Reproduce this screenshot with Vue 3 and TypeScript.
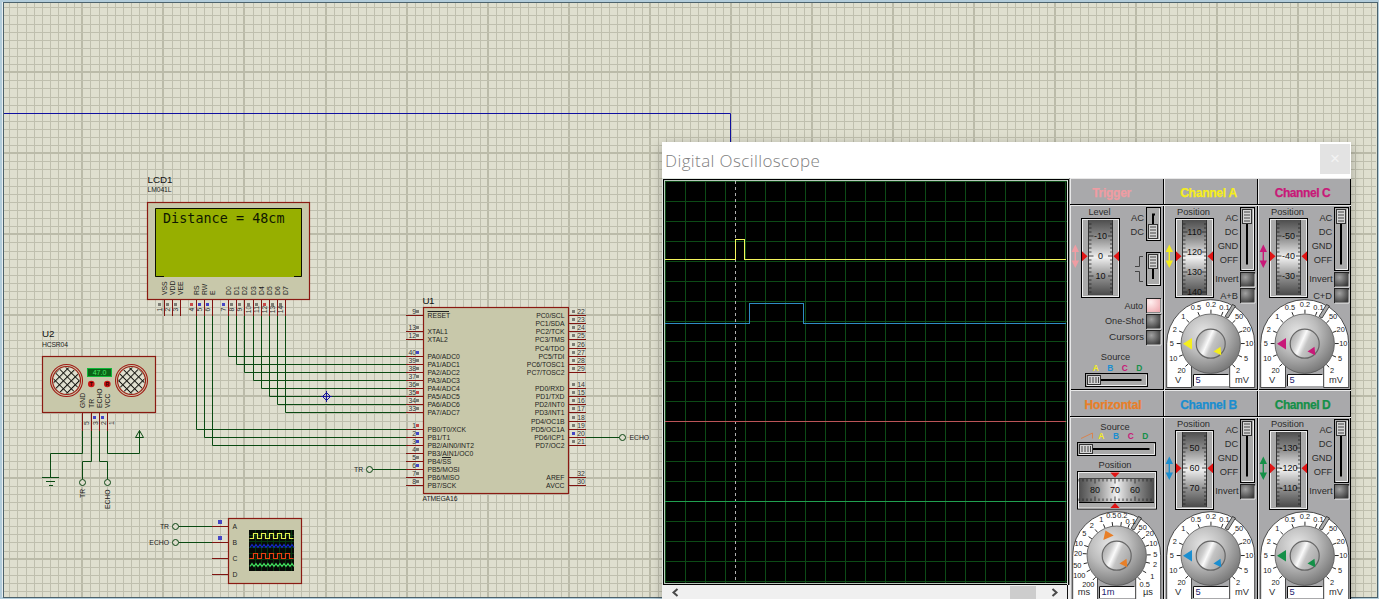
<script setup lang="ts">
interface Mark { x: number; y: number; t: string }
interface Panel {
  name: string
  color: string
  kind: 'trigger' | 'horizontal' | 'channel'
  title: number
  center: number
  values: string[]
  shift: number
  extra?: string
}

const STEP = 8.107
const gridX: number[] = Array.from({ length: 169 }, (_, i) => i - 9)
const gridY: number[] = Array.from({ length: 73 }, (_, i) => i - 8)
const gx = (k: number): number => Math.floor(82.85 + k * STEP)
const gy = (k: number): number => Math.floor(72.7 + k * STEP)

const gray = '#7d7d75'
const blue = '#4545c4'
const red = '#c84848'

const lcdPins = [
  [164.5, 'VSS', '1', gray], [172.5, 'VDD', '2', gray], [180.5, 'VEE', '3', gray],
  [196.5, 'RS', '4', red], [204.5, 'RW', '5', blue], [212.5, 'E', '6', blue],
  [228.5, 'D0', '7', blue], [236.5, 'D1', '8', gray], [244.5, 'D2', '9', gray], [253.5, 'D3', '10', gray],
  [261.5, 'D4', '11', gray], [269.5, 'D5', '12', red], [277.5, 'D6', '13', gray], [285.5, 'D7', '14', gray],
].map(([x, name, num, c]) => ({ x: x as number, name: name as string, num: num as string, c: c as string }))

const left = [
  [315.5, 'RESET', '9', gray], [331.5, 'XTAL1', '13', gray], [339.5, 'XTAL2', '12', gray],
  [356.5, 'PA0/ADC0', '40', blue], [364.5, 'PA1/ADC1', '39', gray], [372.5, 'PA2/ADC2', '38', gray],
  [380.5, 'PA3/ADC3', '37', gray], [388.5, 'PA4/ADC4', '36', gray], [396.5, 'PA5/ADC5', '35', red],
  [404.5, 'PA6/ADC6', '34', gray], [412.5, 'PA7/ADC7', '33', gray],
  [429.5, 'PB0/T0/XCK', '1', red], [437.5, 'PB1/T1', '2', blue], [445.5, 'PB2/AIN0/INT2', '3', blue],
  [453.5, 'PB3/AIN1/OC0', '4', gray], [461.5, 'PB4/SS', '5', gray], [469.5, 'PB5/MOSI', '6', blue],
  [477.5, 'PB6/MISO', '7', gray], [485.5, 'PB7/SCK', '8', gray],
].map(([y, name, num, c]) => ({ y: y as number, name: name as string, num: num as string, c: c as string }))

const right = [
  [315.5, 'PC0/SCL', '22', gray], [323.5, 'PC1/SDA', '23', gray], [331.5, 'PC2/TCK', '24', gray],
  [339.5, 'PC3/TMS', '25', gray], [348.5, 'PC4/TDO', '26', gray], [356.5, 'PC5/TDI', '27', gray],
  [364.5, 'PC6/TOSC1', '28', gray], [372.5, 'PC7/TOSC2', '29', gray],
  [388.5, 'PD0/RXD', '14', gray], [396.5, 'PD1/TXD', '15', gray], [404.5, 'PD2/INT0', '16', gray],
  [412.5, 'PD3/INT1', '17', gray], [421.5, 'PD4/OC1B', '18', gray], [429.5, 'PD5/OC1A', '19', gray],
  [437.5, 'PD6/ICP1', '20', blue], [445.5, 'PD7/OC2', '21', gray],
  [477.5, 'AREF', '32', ''], [485.5, 'AVCC', '30', ''],
].map(([y, name, num, c]) => ({ y: y as number, name: name as string, num: num as string, c: c as string }))

const wires: string[] = [
  ...[3, 4, 5].map((i, n) => `M${lcdPins[i].x} 316V${[429.5, 437.5, 445.5][n]}H406`),
  ...[6, 7, 8, 9, 10, 11, 12, 13].map((i, n) => `M${lcdPins[i].x} 316V${left[n + 3].y}H406`),
  'M373 469.5H406', 'M586 437.5H619', 'M179 526.5H212', 'M179 542.5H212',
  'M82.5 431V453.5H50.5V477', 'M42 477.5H59M46 481.5H55M49 485.5H53',
  'M91.5 431V461.5H82.5V479', 'M99.5 431V461.5H107.5V479', 'M107.5 431V453.5H139.5V430.5L135.5 437.5H143.5L139.5 430.5',
]
const terminals = [[369.5, 469.5], [622.5, 437.5], [175.5, 526.5], [175.5, 542.5], [82.5, 482.5], [107.5, 482.5]]
const sensorPins = [[82.5, 'GND', '5'], [91.5, 'TR', '3'], [99.5, 'ECHO', '2'], [107.5, 'VCC', '1']]
  .map(([x, name, num]) => ({ x: x as number, name: name as string, num: num as string }))

const square = (x: number, top: number, low: number, w: number): string => {
  let d = `M249.5 ${low}H${x}`
  for (let i = 0; i < 5; i++) d += `V${top}h${w}V${low}h${w}`
  return d
}
const ripple = (y: number, a: number): string => {
  let d = `M250 ${y}`
  for (let i = 0; i < 11; i++) d += `l2 ${-a}l2 ${a}`
  return d
}

const panels: Panel[] = [
  { name: 'Trigger', color: '#ef9ca2', kind: 'trigger', title: 39, center: 41.7, values: ['-10', '0', '10'], shift: 0 },
  { name: 'Channel A', color: '#f5ee1c', kind: 'channel', title: 57, center: 44.7, values: ['110', '120', '130', '140'], shift: -4, extra: 'A+B' },
  { name: 'Channel C', color: '#c81878', kind: 'channel', title: 56, center: 44.7, values: ['-50', '-40', '-30'], shift: 0, extra: 'C+D' },
  { name: 'Horizontal', color: '#e87f28', kind: 'horizontal', title: 57, center: 43, values: ['80', '70', '60'], shift: 0 },
  { name: 'Channel B', color: '#1a8ed0', kind: 'channel', title: 57, center: 44.7, values: ['50', '60', '70'], shift: 0 },
  { name: 'Channel D', color: '#149048', kind: 'channel', title: 56, center: 44.7, values: ['-130', '-120', '-110'], shift: 0 },
]

const toMarks = (rows: [number, number, string][]): Mark[] => rows.map(([x, y, t]) => ({ x, y, t }))
const voltMarks = toMarks([
  [17.5, 192, '20'], [9.3, 180.7, '10'], [7.7, 165.5, '5'], [10.7, 151.3, '2'], [19.3, 138.7, '1'],
  [32, 129.3, '0.5'], [47, 126.7, '0.2'], [60.5, 129.7, '0.1'],
  [75, 138.7, '50'], [82.7, 151.3, '20'], [85.3, 165.5, '10'], [82, 180.7, '5'], [74, 192, '2'],
])
const timeMarks = toMarks([
  [18.3, 194.7, '200'], [9.3, 185.7, '100'], [7.3, 175.3, '50'], [8, 163.3, '20'], [8.7, 153.7, '10'], [14.3, 143.7, '5'],
  [21.7, 135.3, '2'], [31.3, 129.3, '1'], [41.3, 125.7, '0.5'], [52.3, 125.3, '0.2'], [60.7, 131, '0.1'],
  [72.7, 137.7, '50'], [79.7, 143.7, '20'], [83.3, 153.7, '10'], [85.3, 164.7, '5'], [85, 174.3, '2'], [82.3, 186.3, '1'], [74.7, 194.3, '0.5'],
])

const marks = (p: Panel): Mark[] => (p.kind === 'horizontal' ? timeMarks : voltMarks)
const tick = (m: Mark): string => {
  const a = Math.atan2(m.y - 165.7, m.x - 46.7)
  const c = Math.cos(a), s = Math.sin(a)
  return `M${46.7 + 30 * c} ${165.7 + 30 * s}L${46.7 + 34 * c} ${165.7 + 34 * s}`
}
const wheelTicks = (shift: number): string => {
  let d = ''
  for (let i = -11; i <= 11; i++) {
    const y = 78 + shift + i * 4
    if (y < 43 || y > 116) continue
    const n = i % 5 === 0 ? 4.5 : 2.5
    d += `M19 ${y}h${n}M42.5 ${y}h${-n}`
  }
  return d
}
const timeTicks = (() => {
  let d = ''
  for (let i = -9; i <= 9; i++) {
    const n = i % 5 === 0 ? 4.5 : 2.5
    d += `M${45 + i * 4} 89v${n}M${45 + i * 4} 111v${-n}`
  }
  return d
})()
const letters = [['A', '#f5ee1c'], ['B', '#1a8ed0'], ['C', '#c81878'], ['D', '#149048']]
</script>

<template>
  <main class="screen">
    <svg class="sheet" width="1379" height="599" viewBox="0 0 1379 599">
      <defs>
        <pattern id="mesh" width="5.6" height="5.6" patternUnits="userSpaceOnUse" patternTransform="rotate(45)">
          <rect width="6" height="6" fill="#e0e0d0" />
          <path d="M0 .5H6M.5 0V6" stroke="#151510" stroke-width="1.1" />
        </pattern>
      </defs>
      <rect width="1379" height="599" fill="#b2ccda" />
      <rect x="2" y="2" width="2" height="595" fill="#e8eef0" />
      <rect x="3.5" y="2.5" width="1374" height="595" fill="#dfdfcf" stroke="#4c626c" />
      <g shape-rendering="crispEdges">
        <rect v-for="k in gridX.filter(k => gx(k) < 1376)" :key="'x' + k" :x="k % 10 ? gx(k) : gx(k) - 1" y="3" :width="k % 10 ? 1 : 2" height="594" :fill="k % 10 ? '#bfbfae' : '#bbbba9'" />
        <rect v-for="k in gridY.filter(k => gy(k) < 597)" :key="'y' + k" x="4" :y="k % 10 ? gy(k) : gy(k) - 1" width="1372" :height="k % 10 ? 1 : 2" :fill="k % 10 ? '#bfbfae' : '#bbbba9'" />
      </g>
      <path class="bus" d="M4 113.5H730.5V145" />
      <path v-for="d in wires" :key="d" class="wire" :d="d" />
      <circle v-for="t in terminals" :key="t.join()" class="terminal" :cx="t[0]" :cy="t[1]" r="3" />
      <g class="origin"><path d="M326.5 392.5l4 4-4 4-4-4z" /><path d="M321 396.5h11M326.5 391v11" /></g>

      <text class="ref" x="147.5" y="183" textLength="25">LCD1</text>
      <text class="part" x="147.5" y="192" textLength="24">LM041L</text>
      <rect class="body" x="147.5" y="202.5" width="162" height="97" />
      <rect x="155" y="208" width="147" height="69" fill="#97af00" />
      <path class="bezel" d="M164 276.5H155.5V208.5H301.5V276.5H294" />
      <text class="lcd" x="163" y="222.5" textLength="121.5" xml:space="preserve">Distance = 48cm</text>
      <g v-for="p in lcdPins" :key="p.name">
        <path class="pin" :d="`M${p.x} 300V316`" />
        <text class="part" :transform="`translate(${p.x + 2.5} 295) rotate(-90)`">{{ p.name }}</text>
        <rect :x="p.x - 6.5" y="303" width="3" height="3" :fill="p.c" />
        <text class="num" text-anchor="middle" :transform="`translate(${p.x - 2.5} 309.5) rotate(-90)`">{{ p.num }}</text>
      </g>

      <text class="ref" x="42" y="337" textLength="12.5">U2</text>
      <text class="part" x="42" y="346.5" textLength="26">HCSR04</text>
      <rect class="body" x="42.5" y="356.5" width="113" height="56" />
      <g v-for="x in [66.5, 131.5]" :key="x">
        <circle class="ring" :cx="x" cy="380.5" r="16" />
        <circle class="ring" :cx="x" cy="380.5" r="14" />
        <circle :cx="x" cy="380.5" r="13" fill="url(#mesh)" />
      </g>
      <rect x="87.5" y="368.5" width="24" height="8" fill="#0a6418" stroke="#10b838" />
      <text class="reading" x="99.5" y="375.2">47.0</text>
      <g v-for="(x, i) in [91.3, 107.3]" :key="x">
        <circle :cx="x" cy="384" r="3.3" fill="#c81414" />
        <text class="led" :x="x" y="386">{{ i ? 'R' : 'T' }}</text>
      </g>
      <g v-for="p in sensorPins" :key="p.name">
        <path class="pin" :d="`M${p.x} 413V431`" />
        <text class="part" :transform="`translate(${p.x + 2.5} 408) rotate(-90)`">{{ p.name }}</text>
        <text class="num" text-anchor="middle" :transform="`translate(${p.x + 6.3} 423) rotate(-90)`">{{ p.num }}</text>
      </g>
      <rect x="93" y="416" width="3" height="3" :fill="blue" />
      <rect x="101" y="416" width="3" height="3" :fill="blue" />
      <text class="part" transform="translate(85 498) rotate(-90)">TR</text>
      <text class="part" transform="translate(110 509) rotate(-90)">ECHO</text>

      <rect class="body" x="423.5" y="307.5" width="145" height="186" />
      <text class="ref" x="422.5" y="304" textLength="12">U1</text>
      <text class="part" x="422.5" y="501" textLength="35">ATMEGA16</text>
      <g v-for="p in left" :key="p.name">
        <path class="pin" :d="`M406 ${p.y}H423`" />
        <text class="part" x="427.5" :y="p.y + 2.5">{{ p.name }}</text>
        <text class="num" x="416" :y="p.y - 1.3" text-anchor="end">{{ p.num }}</text>
        <rect x="416" :y="p.y - 5.5" width="3" height="3" :fill="p.c" />
      </g>
      <path d="M427.5 311.5H449M442 457.5H451" stroke="#222" />
      <g v-for="p in right" :key="p.name">
        <path class="pin" :d="`M569 ${p.y}H586`" />
        <text class="part" x="564.5" :y="p.y + 2.5" text-anchor="end">{{ p.name }}</text>
        <text class="num" x="577.3" :y="p.y - 1.3">{{ p.num }}</text>
        <rect v-if="p.c" x="572" :y="p.y - 5.5" width="3" height="3" :fill="p.c" />
      </g>
      <text class="part" x="629.5" y="440">ECHO</text>
      <text class="part" x="354" y="472">TR</text>

      <rect class="body" x="228.5" y="518.5" width="73" height="65" />
      <g v-for="(t, i) in ['A', 'B', 'C', 'D']" :key="t">
        <path class="pin" :d="`M212 ${526.5 + i * 16}H228`" />
        <text class="part" x="232.5" :y="529 + i * 16">{{ t }}</text>
      </g>
      <rect x="218" y="520" width="4" height="4" :fill="blue" />
      <rect x="218" y="536" width="4" height="4" :fill="blue" />
      <text class="part" x="169" y="529" text-anchor="end">TR</text>
      <text class="part" x="169" y="545" text-anchor="end">ECHO</text>
      <rect x="249" y="530" width="45" height="41" fill="#060a06" />
      <path d="M249 535.5h45M249 541.5h45M249 547.5h45M249 553.5h45M249 559.5h45M249 565.5h45M255.5 530v41M261.5 530v41M267.5 530v41M273.5 530v41M279.5 530v41M285.5 530v41M291.5 530v41" stroke="#07380f" />
      <path :d="square(253.5, 533.5, 538.5, 4)" class="mini" stroke="#e4f050" />
      <path :d="ripple(547.5, 3)" class="mini" stroke="#1428c8" />
      <path :d="square(253.5, 553.5, 558.5, 4)" class="mini" stroke="#e84010" />
      <path :d="ripple(566.5, 3)" class="mini" stroke="#44e060" />
    </svg>

    <section class="window">
      <header class="titlebar">
        <span class="caption">Digital Oscilloscope</span>
        <span class="close">×</span>
      </header>
      <div class="content">
        <div class="display">
          <svg width="408" height="407" viewBox="662 178 408 407" shape-rendering="crispEdges">
            <rect x="662" y="178" width="408" height="407" fill="#dfe6e0" />
            <rect x="663" y="179" width="406" height="406" fill="#000" />
            <rect x="664" y="180" width="404" height="404" fill="#b9c8bc" />
            <rect x="665" y="181" width="402" height="402" fill="#000" />
            <path v-for="i in 21" :key="i" :d="`M${645.5 + i * 20} 181V583M665 ${161.5 + i * 20}H1067`" stroke="#0c4a16" />
            <path d="M735.5 181V583" stroke="#b0b0b0" stroke-dasharray="3 3" />
            <path class="trace" d="M665 259.5H735.5V239.5H744.5V259.5H1066" stroke="#f4f45c" />
            <path class="trace" d="M665 323.5H749.5V303.5H803.5V323.5H1066" stroke="#2f8cc4" />
            <path class="trace" d="M665 421.5H1066" stroke="#bc5458" />
            <path class="trace" d="M665 501.5H1066" stroke="#20a050" />
            <path d="M1067.5 180V585" stroke="#dfe6e0" />
            <path d="M1069.5 178V585" stroke="#999" />
          </svg>
          <div class="scrollbar">
            <svg class="arrow" width="8" height="9" viewBox="0 0 8 9"><path d="M6.5 1L2.5 4.5L6.5 8" /></svg>
            <span class="thumb" />
            <svg class="arrow" width="8" height="9" viewBox="0 0 8 9"><path d="M1.5 1L5.5 4.5L1.5 8" /></svg>
          </div>
        </div>

        <div class="panels">
          <article v-for="p in panels" :key="p.name" class="panel" :style="{ '--tone': p.color }">
            <svg width="94" height="212" viewBox="0 0 94 212">
              <defs>
                <linearGradient id="drum" x2="0" y2="1">
                  <stop offset="0" stop-color="#4e4e4e" /><stop offset=".25" stop-color="#929292" /><stop offset=".5" stop-color="#f0f0f0" /><stop offset=".75" stop-color="#929292" /><stop offset="1" stop-color="#4a4a4a" />
                </linearGradient>
                <linearGradient id="drumH">
                  <stop offset="0" stop-color="#4e4e4e" /><stop offset=".25" stop-color="#929292" /><stop offset=".5" stop-color="#f0f0f0" /><stop offset=".75" stop-color="#929292" /><stop offset="1" stop-color="#4a4a4a" />
                </linearGradient>
                <radialGradient id="knob" cx=".38" cy=".32" r=".75">
                  <stop offset="0" stop-color="#e6e6e6" /><stop offset=".45" stop-color="#bcbcbc" /><stop offset="1" stop-color="#707070" />
                </radialGradient>
                <linearGradient id="cap" x2="1" y2=".45">
                  <stop offset="0" stop-color="#999" /><stop offset=".35" stop-color="#cfcfcf" /><stop offset=".5" stop-color="#fafafa" /><stop offset=".66" stop-color="#c4c4c4" /><stop offset="1" stop-color="#aaa" />
                </linearGradient>
                <radialGradient id="push" cx=".35" cy=".35" r=".75">
                  <stop offset="0" stop-color="#a2a2a2" /><stop offset="1" stop-color="#3a3a3a" />
                </radialGradient>
                <radialGradient id="lit" cx=".3" cy=".25" r=".9">
                  <stop offset="0" stop-color="#fff0f0" /><stop offset="1" stop-color="#eeaab0" />
                </radialGradient>
                <clipPath id="slot"><rect x="18" y="42" width="25" height="75" /></clipPath>
              </defs>
              <path d="M0 26.5H94" stroke="#000" /><path d="M1 27.5H94" stroke="#e8e8e8" />
              <text class="heading" :x="p.center" y="19" :textLength="p.title">{{ p.name }}</text>

              <g v-if="p.kind !== 'horizontal'">
                <text class="label mid" x="29.5" y="37">{{ p.kind === 'trigger' ? 'Level' : 'Position' }}</text>
                <rect class="frame" x="11.5" y="40.5" width="38" height="79" />
                <rect class="shine" x="12.5" y="41.5" width="36" height="77" />
                <rect x="18" y="42" width="25" height="75" fill="url(#drum)" />
                <path d="M18.5 42V117M42.5 42V117" stroke="#333" />
                <path :d="wheelTicks(p.shift)" stroke="#222" stroke-width=".8" />
                <g clip-path="url(#slot)">
                  <text v-for="(v, i) in p.values" :key="v" class="value" x="30.5" :y="61 + p.shift + i * 20">{{ v }}</text>
                </g>
                <path d="M12 73.3L17.5 78.3L12 83.3ZM49 73.3L43.5 78.3L49 83.3Z" fill="#e01414" />
                <path class="tone" d="M5.3 66.5L9 74H6V82.5H9L5.3 90L1.6 82.5H4.6V74H1.6Z" />
              </g>

              <g v-if="p.kind === 'trigger'">
                <g v-for="(y, i) in [29.5, 74.5]" :key="y">
                  <rect class="frame" x="76.5" :y="y" width="14" height="33" />
                  <path class="shine" :d="`M89.5 ${y + 1}V${y + 32}H78`" />
                  <path :d="i ? 'M83 90V101' : 'M85 36.5H83V47'" stroke="#000" stroke-width="2" fill="none" />
                  <rect class="handle" x="78.5" :y="i ? 76.5 : 46.5" width="9" height="14" />
                  <path class="grip" :d="[0, 1, 2, 3].map(n => `M80 ${(i ? 79 : 49) + n * 3}h6`).join('')" />
                </g>
                <text class="label end" x="74" y="43">AC</text>
                <text class="label end" x="74" y="57">DC</text>
                <path d="M65 88.5H69.5V78.5H73M65 93.5H69.5V103.5H73" fill="none" stroke="#444" />
                <g v-for="(t, i) in ['Auto', 'One-Shot', 'Cursors']" :key="t">
                  <text class="label end" :x="i ? 74 : 73" :y="130.5 + i * 15.5" :textLength="[18.5, 39, 35][i]" lengthAdjust="spacingAndGlyphs">{{ t }}</text>
                  <rect x="76.5" :y="120.5 + i * 16" width="14" height="14" :fill="i ? 'url(#push)' : 'url(#lit)'" stroke="#222" />
                  <path class="shine" :d="`M77 ${135 + i * 16}H91V${121 + i * 16}`" />
                </g>
                <text class="label mid" x="45.5" y="182">Source</text>
                <text v-for="(l, i) in letters" :key="l[0]" class="source" :x="25.7 + i * 14.5" y="192.5" :fill="l[1]">{{ l[0] }}</text>
                <rect class="frame" x="15.5" y="195.5" width="62" height="13" />
                <path class="shine" d="M17 207.5H76.5V197" />
                <path d="M30 202H71.5" stroke="#000" stroke-width="2" />
                <rect class="handle" x="17.5" y="197.5" width="13" height="9" />
                <path class="grip" d="M20 199v6M23 199v6M26 199v6M28.5 199v6" />
              </g>

              <g v-if="p.kind === 'horizontal'">
                <text class="label mid" x="45" y="39.5">Source</text>
                <path d="M11 48.5L22.5 43V48.5" fill="none" stroke="#d88450" />
                <text v-for="(l, i) in letters" :key="l[0]" class="source" :x="31.3 + i * 14.7" y="49" :fill="l[1]">{{ l[0] }}</text>
                <rect class="frame" x="7.5" y="52.5" width="78" height="13" />
                <path class="shine" d="M9 64.5H84.5V54" />
                <path d="M23 59H79.5" stroke="#000" stroke-width="2" />
                <rect class="handle" x="9.5" y="54.5" width="13" height="9" />
                <path class="grip" d="M12 56v6M15 56v6M18 56v6M20.5 56v6" />
                <text class="label mid" x="45" y="77.5">Position</text>
                <rect class="frame" x="7.5" y="81.5" width="79" height="37.5" />
                <rect class="shine" x="8.5" y="82.5" width="77" height="35.5" />
                <rect x="9" y="88" width="75" height="24" fill="url(#drumH)" />
                <path d="M9 112.5H84" stroke="#000" /><path d="M9 88.5H84" stroke="#444" />
                <path :d="timeTicks" stroke="#222" stroke-width=".8" />
                <text v-for="(v, i) in p.values" :key="v" class="value" :x="25 + i * 20" y="103">{{ v }}</text>
                <path d="M40.3 82.5H49.7L45 87.5ZM40.3 118H49.7L45 113Z" fill="#e01414" />
              </g>

              <g v-if="p.kind === 'channel'">
                <rect class="frame" x="76.5" y="29.5" width="14" height="63" />
                <path class="shine" d="M89.5 31V91.5H78" />
                <path d="M83 45V86.5" stroke="#000" stroke-width="2" />
                <rect class="handle" x="78.5" y="31.5" width="9" height="14" />
                <path class="grip" d="M80 34h6M80 37h6M80 40h6M80 43h6" />
                <text v-for="(t, i) in ['AC', 'DC', 'GND', 'OFF']" :key="t" class="label end" x="74.3" :y="43 + i * 14">{{ t }}</text>
                <text class="label end" x="74.5" y="104">Invert</text>
                <g v-for="y in (p.extra ? [94.5, 110.5] : [94.5])" :key="y">
                  <rect x="76.5" :y="y" width="14" height="14" fill="url(#push)" stroke="#222" />
                  <path class="shine" :d="`M77 ${y + 14.5}H91V${y + 1}`" />
                </g>
                <text v-if="p.extra" class="label end" x="74" y="121">{{ p.extra }}</text>
              </g>

              <g v-if="p.kind !== 'trigger'">
                <path d="M2.7 209.5V165.7A44 44 0 0 1 90.7 165.7V209.5H65.7V150H27.5V209.5Z" fill="#fff" stroke="#222" stroke-width=".8" />
                <path d="M61 138.5L68.5 126.5L71.5 128L64 140Z" fill="#aaa" stroke="#222" stroke-width=".8" />
                <path v-for="m in marks(p)" :key="m.t + m.x" :d="tick(m)" stroke="#111" stroke-width=".9" />
                <circle cx="46.7" cy="165.7" r="29.7" fill="url(#knob)" stroke="#555" stroke-width=".8" />
                <circle cx="46.7" cy="165.7" r="14.5" fill="url(#cap)" stroke="#666" stroke-width="1.2" />
                <text v-for="m in marks(p)" :key="m.x + m.t" class="scale" :x="m.x" :y="m.y + 2.6">{{ m.t }}</text>
                <path v-if="p.kind === 'channel'" class="tone" d="M19 165.7L28 160V171.5Z" />
                <path v-else class="tone" d="M35.5 140.5L33.3 150L43.7 145.5Z" />
                <path class="tone" d="M49.5 173.5L56.5 168.8L57.3 177.3Z" />
                <text class="label mid" x="14" y="205">{{ p.kind === 'channel' ? 'V' : 'ms' }}</text>
                <text class="label mid" x="78" y="205">{{ p.kind === 'channel' ? 'mV' : 'µs' }}</text>
                <rect x="29" y="196" width="36" height="12" fill="#fff" />
                <path d="M29.5 208V196.5H64.5" stroke="#111" fill="none" />
                <text class="entry" x="31.5" y="205">{{ p.kind === 'channel' ? '5' : '1m' }}</text>
              </g>
            </svg>
          </article>
        </div>
      </div>
    </section>
  </main>
</template>

<style>
body { margin: 0; overflow: hidden; }
</style>

<style scoped>
.screen { position: relative; width: 1379px; height: 599px; overflow: hidden; font-family: "Liberation Sans", Arial, sans-serif; }
.sheet { display: block; }
.bus { fill: none; stroke: #1010a0; }
.wire { fill: none; stroke: #0a4a12; }
.terminal { fill: #deddcd; stroke: #0a4412; }
.origin { fill: none; stroke: #14149a; }
.body { fill: #c8c8aa; stroke: #8a1a12; stroke-width: 1.2; }
.pin { stroke: #801410; fill: none; }
.bezel { fill: none; stroke: #0c1000; }
.ring { fill: none; stroke: #a01a14; stroke-width: 1.1; }
.ref { font-size: 9.8px; fill: #111; }
.part { font-size: 6.8px; fill: #1c1c1c; }
.num { font-size: 6.8px; fill: #333; }
.lcd { font: 13.4px "DejaVu Sans Mono", monospace; fill: #101800; }
.reading { font-size: 7px; fill: #48e868; text-anchor: middle; }
.led { font-size: 5px; font-weight: bold; fill: #300; text-anchor: middle; }
.mini { fill: none; stroke-width: 1.2; }

.window { position: absolute; left: 662px; top: 142px; width: 689px; height: 470px; background: #f0f0f0; box-shadow: 0 3px 11px rgba(0, 0, 0, .28); }
.titlebar { display: flex; justify-content: space-between; height: 36px; background: #fff; }
.caption { padding-left: 3px; font: 300 17px/37px "Open Sans", "Noto Sans", sans-serif; letter-spacing: .39px; color: #808080; white-space: nowrap; }
.close { width: 30px; height: 30px; margin: 2px 1px 0 0; background: #e3e3e3; color: #f3f3f3; font-size: 17px; line-height: 30px; text-align: center; }
.content { display: flex; }
.display { width: 408px; }
.display > svg { display: block; }
.trace { fill: none; }
.scrollbar { display: flex; align-items: center; width: 406px; height: 14px; box-sizing: border-box; padding: 0 8px 0 9px; background: #f0f0f0; border-right: 1px solid #111; }
.arrow path { fill: none; stroke: #484848; stroke-width: 2; }
.thumb { width: 26px; height: 13px; margin: 1px 15px 0 auto; background: #cdcdcd; }
.panels { display: grid; grid-template-columns: 94px 94px 93px; grid-template-rows: 212px 212px; }
.panel { overflow: hidden; background: #a9a9ab; box-shadow: inset 1px 1px #e8e8e8, inset -1px -1px #000; }
.panel svg { display: block; }
.heading { font-size: 12px; font-weight: bold; fill: var(--tone); stroke: var(--tone); stroke-width: .25; text-anchor: middle; }
.label { font-size: 9.3px; fill: #2c2c2c; }
.mid { text-anchor: middle; }
.end { text-anchor: end; }
.frame { fill: #aaa; stroke: #000; }
.shine { fill: none; stroke: #eee; }
.tone { fill: var(--tone); }
.value { font-size: 9px; fill: #111; text-anchor: middle; }
.handle { fill: #d4d4d4; stroke: #333; }
.grip { stroke: #444; fill: none; }
.source { font-size: 8.4px; font-weight: bold; text-anchor: middle; }
.scale { font-size: 7.4px; fill: #222; text-anchor: middle; }
.entry { font-size: 9.3px; fill: #1c1c70; }
</style>
